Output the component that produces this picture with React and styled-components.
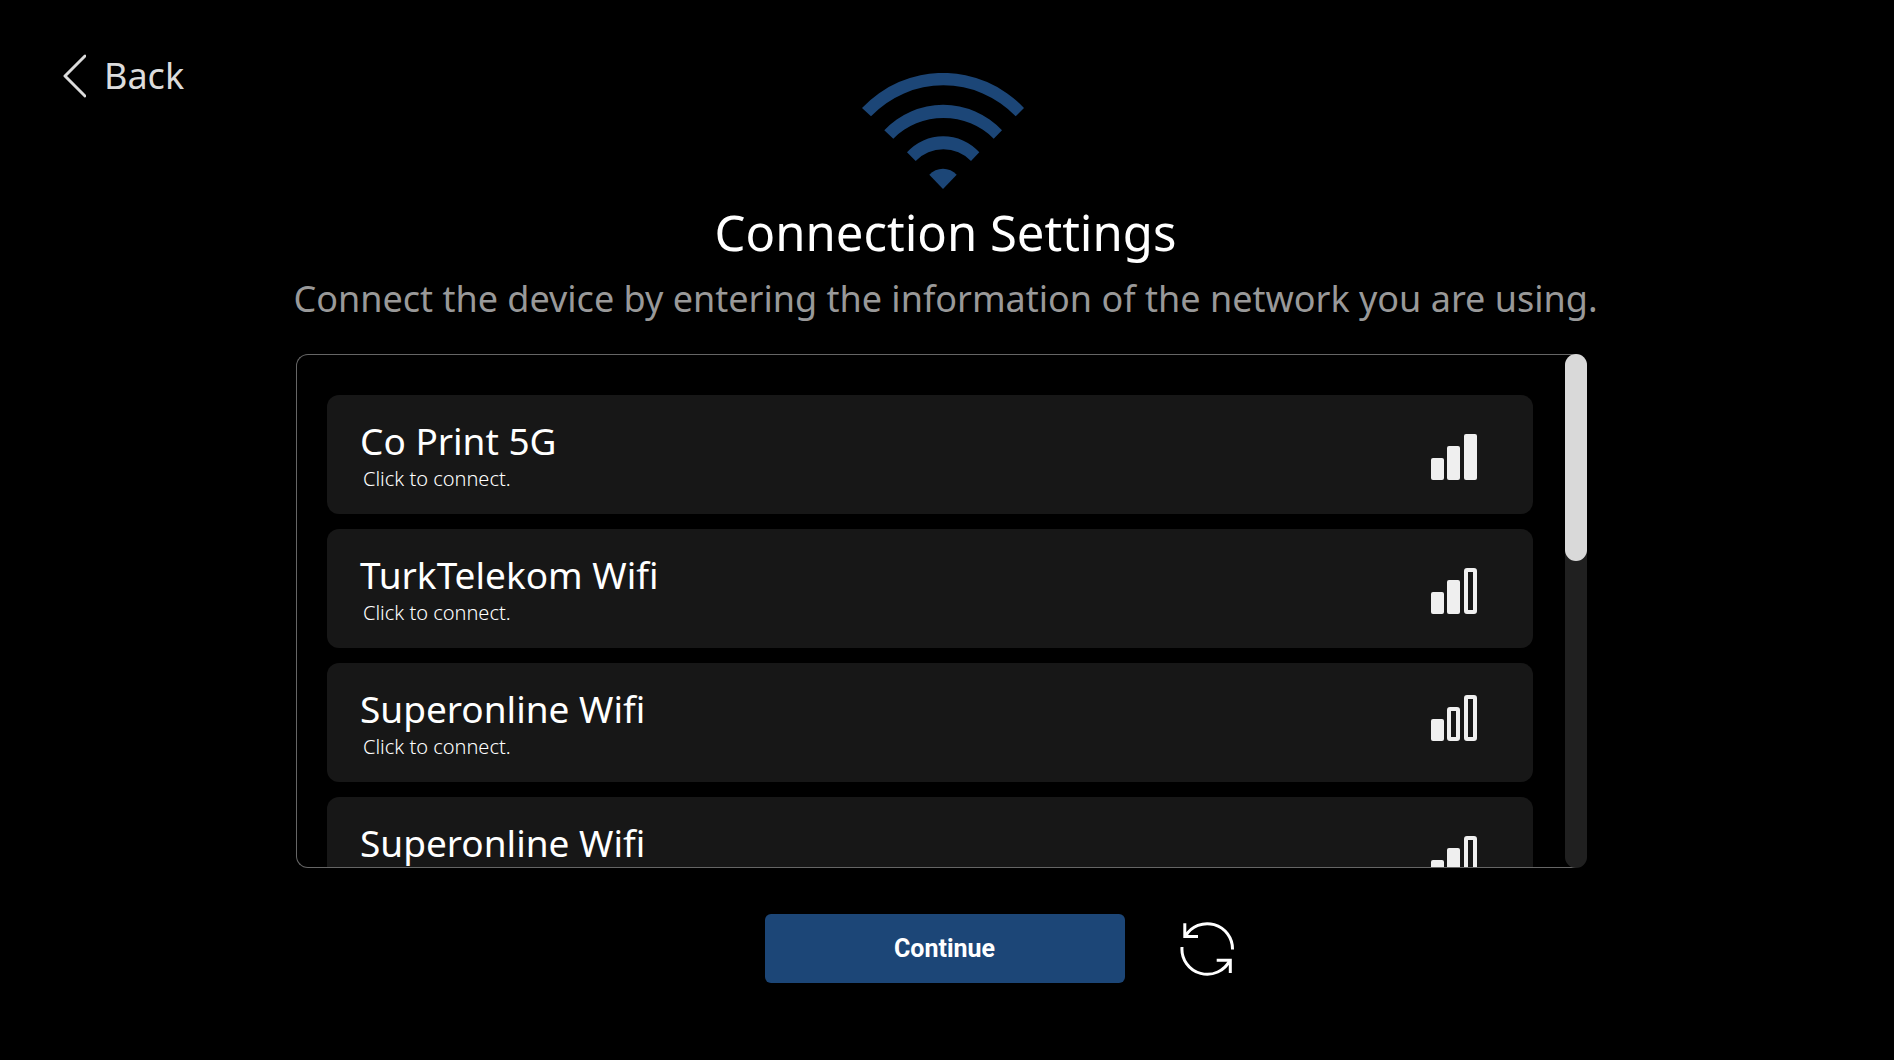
import React from 'react';
import styled, { createGlobalStyle } from 'styled-components';

const GlobalStyle = createGlobalStyle`
  *, *::before, *::after { box-sizing: border-box; }
  body {
    margin: 0;
    background: #000;
    color: #fff;
    font-family: 'Noto Sans', 'Open Sans', sans-serif;
  }
  button { font: inherit; color: inherit; border: 0; padding: 0; background: none; cursor: pointer; }
`;

const Page = styled.main`
  min-height: 100vh;
  padding: 52px 73px 40px 62px;
  background: #000;
`;

const Header = styled.header`
  display: grid;
  grid-template-columns: 1fr auto 1fr;
  align-items: start;
`;

const BackButton = styled.button`
  display: flex;
  align-items: center;
  justify-self: start;
  gap: 18px;
  color: #dcdcdc;
  font-size: 36px;
  line-height: 48px;
`;

const WifiLogo = styled.svg`
  display: block;
  margin: 21px 0 0 4px;
  fill: #1c4677;
`;

const Intro = styled.section`
  padding: 11px 0 31px 8px;
  text-align: center;
`;

const Title = styled.h1`
  margin: 0 0 11px;
  font-size: 49px;
  font-weight: 400;
  line-height: 64px;
`;

const Subtitle = styled.p`
  margin: 0;
  color: #999;
  font-size: 36px;
  line-height: 48px;
`;

const Panel = styled.section`
  display: flex;
  width: 100%;
  max-width: 1291px;
  height: 514px;
  margin: 0 auto;
`;

const NetworkList = styled.ul`
  flex: 1;
  display: flex;
  flex-direction: column;
  gap: 15px;
  margin: 0;
  padding: 40px 43px 0 30px;
  overflow: hidden;
  list-style: none;
  border: 1px solid #666;
  border-right: 0;
  border-radius: 12px 0 0 12px;
`;

const NetworkItem = styled.li`
  flex: none;
`;

const NetworkButton = styled.button`
  display: flex;
  justify-content: space-between;
  align-items: flex-start;
  width: 100%;
  height: 119px;
  padding: 22px 56px 0 33px;
  text-align: left;
  background: #171717;
  border-radius: 12px;
`;

const NetworkName = styled.span`
  display: block;
  font-size: 37px;
  line-height: 48px;
`;

const NetworkHint = styled.span`
  display: block;
  padding-left: 3px;
  font-size: 20px;
  font-weight: 300;
  line-height: 28px;
`;

const SignalIcon = styled.svg`
  flex: none;
  margin-top: ${(p) => (p.$raised ? 10 : 17)}px;
`;

const ScrollTrack = styled.div`
  flex: none;
  width: 22px;
  margin-left: -11px;
  background: #202020;
  border-radius: 11px;
`;

const ScrollThumb = styled.div`
  height: 207px;
  background: #d9d9d9;
  border-radius: 11px;
`;

const Footer = styled.footer`
  display: grid;
  grid-template-columns: 1fr 360px 1fr;
  align-items: center;
  column-gap: 54px;
  padding: 46px 0 0 6px;
`;

const ContinueButton = styled.button`
  grid-column: 2;
  height: 69px;
  background: #1c4677;
  border-radius: 6px;
  font-family: 'Liberation Sans Narrow', Roboto, sans-serif;
  font-size: 25px;
  font-weight: 700;
`;

const RefreshButton = styled.button`
  justify-self: start;
`;

const RefreshIcon = styled.svg`
  display: block;
  fill: none;
  stroke: #fff;
  stroke-width: 3;
`;

const BARS = [
  { x: 0, y: 24 },
  { x: 16, y: 12 },
  { x: 33, y: 0 },
];

function Signal({ level, raised }) {
  return (
    <SignalIcon $raised={raised} width="46" height="46" viewBox="0 0 46 46" role="img" aria-label={`Signal ${level} of 3`}>
      {BARS.map((bar, i) =>
        i < level ? (
          <rect key={bar.x} x={bar.x} y={bar.y} width="13" height={46 - bar.y} rx="2" fill="#efefef" />
        ) : (
          <rect
            key={bar.x}
            x={bar.x + 2}
            y={bar.y + 2}
            width="9"
            height={42 - bar.y}
            rx="1"
            fill="none"
            stroke="#efefef"
            strokeWidth="4"
          />
        )
      )}
    </SignalIcon>
  );
}

const NETWORKS = [
  { id: 1, name: 'Co Print 5G', level: 3 },
  { id: 2, name: 'TurkTelekom Wifi', level: 2 },
  { id: 3, name: 'Superonline Wifi', level: 1, raised: true },
  { id: 4, name: 'Superonline Wifi', level: 2 },
];

export default function App() {
  return (
    <Page>
      <GlobalStyle />
      <Header>
        <BackButton type="button">
          <svg width="24" height="44" viewBox="0 0 24 44" fill="none" stroke="#dcdcdc" strokeWidth="3" strokeLinecap="round" strokeLinejoin="round" aria-hidden="true">
            <path d="M23 2 L3 22 L23 42" />
          </svg>
          Back
        </BackButton>
        <WifiLogo width="163" height="116" viewBox="0 0 163 116" aria-hidden="true">
          <path d="M0 35 A111 111 0 0 1 162 35 L153.7 43.3 A100 100 0 0 0 9 43.3 Z" />
          <path d="M22.3 57.3 A80.5 80.5 0 0 1 140 57.3 L131.7 65.7 A71 71 0 0 0 31.3 65.7 Z" />
          <path d="M45 79.3 A48.7 48.7 0 0 1 117.3 79.3 L109 88 A38.6 38.6 0 0 0 53.7 88 Z" />
          <path d="M67.3 101.7 A18.6 18.6 0 0 1 94.7 101.7 L81 116 Z" />
        </WifiLogo>
      </Header>

      <Intro>
        <Title>Connection Settings</Title>
        <Subtitle>Connect the device by entering the information of the network you are using.</Subtitle>
      </Intro>

      <Panel aria-label="Available networks">
        <NetworkList>
          {NETWORKS.map((network) => (
            <NetworkItem key={network.id}>
              <NetworkButton type="button">
                <span>
                  <NetworkName>{network.name}</NetworkName>
                  <NetworkHint>Click to connect.</NetworkHint>
                </span>
                <Signal level={network.level} raised={network.raised} />
              </NetworkButton>
            </NetworkItem>
          ))}
        </NetworkList>
        <ScrollTrack>
          <ScrollThumb />
        </ScrollTrack>
      </Panel>

      <Footer>
        <ContinueButton type="button">Continue</ContinueButton>
        <RefreshButton type="button" aria-label="Refresh networks">
          <RefreshIcon width="58" height="56" viewBox="0 0 58 56">
            <path d="M6.5 15 A25.3 25.3 0 0 1 53.5 28.5" />
            <path d="M5.8 2.3 V15.6 H19" />
            <path d="M3 26 A25.3 25.3 0 0 0 51 39" />
            <path d="M37.7 39.3 H51.3 V52" />
          </RefreshIcon>
        </RefreshButton>
      </Footer>
    </Page>
  );
}
